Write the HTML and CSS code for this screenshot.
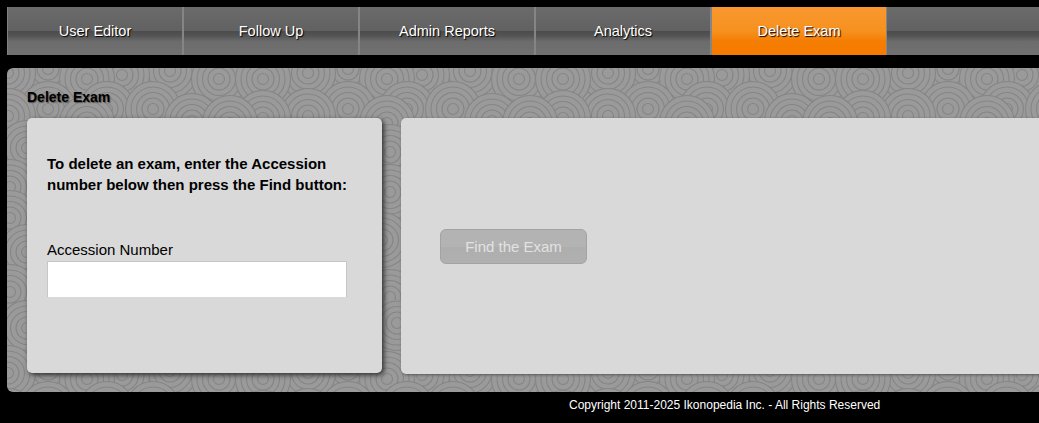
FILE: index.html
```html
<!DOCTYPE html>
<html lang="en">
<head>
<meta charset="utf-8">
<title>Delete Exam</title>
<link rel="stylesheet" href="styles.css">
</head>
<body>
<div class="page">
  <nav class="tabs">
    <a class="tab">User Editor</a>
    <a class="tab">Follow Up</a>
    <a class="tab">Admin Reports</a>
    <a class="tab">Analytics</a>
    <a class="tab tab-active">Delete Exam</a>
    <div class="tab-rest"></div>
  </nav>
  <main class="panel">
    <h1 class="panel-title">Delete Exam</h1>
    <div class="cards">
      <section class="card card-form">
        <p class="intro">To delete an exam, enter the Accession number below then press the Find button:</p>
        <label class="field-label" for="accession">Accession Number</label>
        <input class="field" id="accession" type="text">
      </section>
      <section class="card card-action">
        <button class="find" type="button" disabled>Find the Exam</button>
      </section>
    </div>
  </main>
  <footer class="footer">Copyright 2011-2025 Ikonopedia Inc. - All Rights Reserved</footer>
</div>
</body>
</html>
```
FILE: styles.css
```css
* { box-sizing: border-box; }
html, body { margin: 0; height: 423px; overflow: hidden; background: #000; }
body { font-family: "Liberation Sans", Arial, sans-serif; color: #000; }
.page { padding: 7px 0 0 7px; width: 1200px; }

.tabs { display: flex; height: 48px; margin-bottom: 13px; border-left: 1px solid #808080; }
.tab, .tab-rest {
  background: linear-gradient(#6b6b6b 0, #616161 50%, #4c4c4c 51%, #545454 60%, #6c6c6c 72%, #717171 100%);
}
.tab {
  display: flex; align-items: center; justify-content: center;
  width: 176px; height: 48px;
  font-size: 14.5px; color: #fff; text-shadow: 1px 1px 1px #000;
  border-right: 2px solid #858585;
  padding-bottom: 1px;
}
.tab-active {
  width: 175px;
  background: linear-gradient(#f8982f 0, #f6911f 50%, #f57d02 72%, #f57c00 100%);
  border-right: 1px solid #858585;
}
.tab-rest { flex: 1; }

.panel {
  height: 324px; padding: 21px 20px 0;
  border-radius: 6px 0 0 6px;
  background-color: #9a9a9a;
  background-position: -7px -68px;
  background-image: url("data:image/svg+xml,%3Csvg xmlns='http://www.w3.org/2000/svg' xmlns:xlink='http://www.w3.org/1999/xlink' width='300' height='300'%3E%3Crect width='300' height='300' fill='%239a9a9a'/%3E%3Cdefs%3E%3Cg id='c' stroke='%23858585' stroke-width='1.1' fill='none'%3E%3Ccircle r='27.5' fill='%239a9a9a'/%3E%3Ccircle r='22'/%3E%3Ccircle r='16.5'/%3E%3Ccircle r='11'/%3E%3Ccircle r='5.5'/%3E%3C/g%3E%3C/defs%3E%3Cuse xlink:href='%23c' x='90' y='-3'/%3E%3Cuse xlink:href='%23c' x='10' y='-8'/%3E%3Cuse xlink:href='%23c' x='97' y='23'/%3E%3Cuse xlink:href='%23c' x='27' y='28'/%3E%3Cuse xlink:href='%23c' x='48' y='69'/%3E%3Cuse xlink:href='%23c' x='348' y='69'/%3E%3Cuse xlink:href='%23c' x='170' y='71'/%3E%3Cuse xlink:href='%23c' x='8' y='73'/%3E%3Cuse xlink:href='%23c' x='308' y='73'/%3E%3Cuse xlink:href='%23c' x='122' y='75'/%3E%3Cuse xlink:href='%23c' x='87' y='79'/%3E%3Cuse xlink:href='%23c' x='219' y='79'/%3E%3Cuse xlink:href='%23c' x='263' y='79'/%3E%3Cuse xlink:href='%23c' x='48' y='109'/%3E%3Cuse xlink:href='%23c' x='107' y='109'/%3E%3Cuse xlink:href='%23c' x='153' y='109'/%3E%3Cuse xlink:href='%23c' x='8' y='116'/%3E%3Cuse xlink:href='%23c' x='308' y='116'/%3E%3Cuse xlink:href='%23c' x='263' y='118'/%3E%3Cuse xlink:href='%23c' x='192' y='121'/%3E%3Cuse xlink:href='%23c' x='230' y='123'/%3E%3Cuse xlink:href='%23c' x='87' y='123'/%3E%3Cuse xlink:href='%23c' x='27' y='148'/%3E%3Cuse xlink:href='%23c' x='90' y='152'/%3E%3Cuse xlink:href='%23c' x='10' y='187'/%3E%3Cuse xlink:href='%23c' x='90' y='192'/%3E%3Cuse xlink:href='%23c' x='10' y='218'/%3E%3Cuse xlink:href='%23c' x='82' y='240'/%3E%3Cuse xlink:href='%23c' x='27' y='252'/%3E%3Cuse xlink:href='%23c' x='10' y='292'/%3E%3Cuse xlink:href='%23c' x='90' y='297'/%3E%3C/svg%3E");
}
.panel-title {
  margin: 0 0 13px; height: 16px;
  font-size: 14px; line-height: 16px; font-weight: bold;
  text-shadow: 1px 1px 1px #555;
}

.cards { display: flex; gap: 19px; align-items: flex-start; }
.card { background: #d9d9d9; border-radius: 5px; }
.card-form {
  width: 355px; height: 255px; padding: 35px 20px 0;
  box-shadow: 2px 2px 5px #2e2e2e;
}
.card-action {
  width: 760px; height: 256px; padding: 111px 39px 0;
  box-shadow: 1px 1px 3px #555;
}
.intro { margin: 0 0 46px; font-size: 15px; line-height: 21px; font-weight: bold; width: 320px; }
.field-label { display: block; height: 17px; margin-bottom: 3px; font-size: 15px; line-height: 17px; }
.field {
  display: block; width: 300px; height: 36px; margin: 0;
  background: #fff; border: 1px solid #c6c6c6; border-bottom: 0; border-radius: 0; outline: 0;
}
.find {
  display: block; width: 147px; height: 35px; padding: 0;
  font: 15px "Liberation Sans", Arial, sans-serif; color: #e2e2e2;
  background: linear-gradient(#b3b3b3 0, #b3b3b3 50%, #aeaeae 52%, #b0b0b0 100%);
  border: 1px solid #a3a3a3; border-radius: 6px;
}
.footer {
  padding: 6px 0 0 562px;
  font-size: 12px; line-height: 15px; color: #fff;
}
```
